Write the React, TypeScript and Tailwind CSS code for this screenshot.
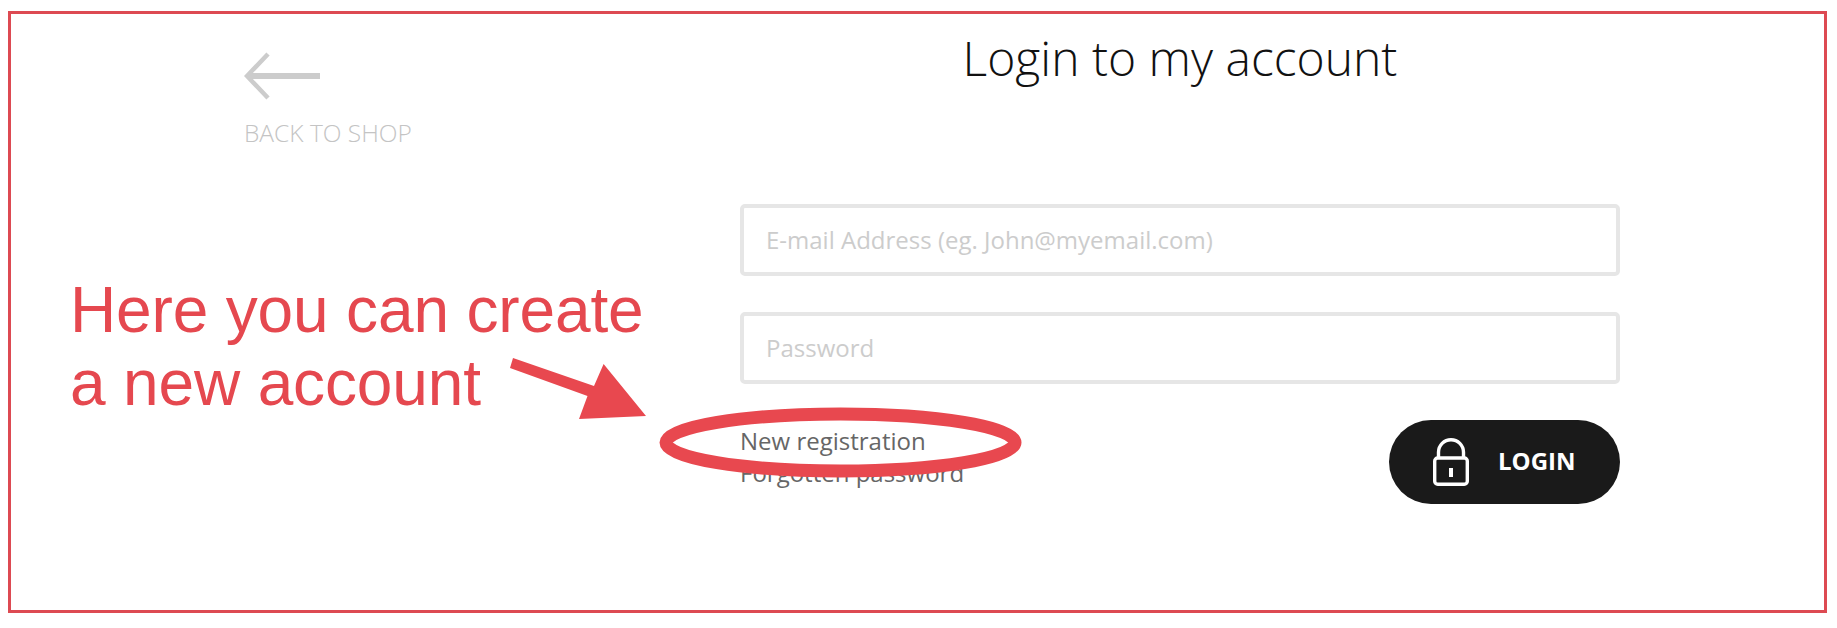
export default function App() {
  return (
    <div className="relative h-[628px] w-[1837px] overflow-hidden bg-white font-['Open_Sans',sans-serif]">
      <div className="ml-[8px] mt-[11px] flex h-[602px] w-[1819px] border-[3px] border-[#dd4a52] pl-[233px]">
        {/* Back link */}
        <div className="w-[496px] shrink-0 pt-[38px]">
          <svg width="78" height="48" viewBox="0 0 78 48" className="block text-[#cccccc]" fill="none" stroke="currentColor">
            <path d="M76 24H4" strokeWidth="6" />
            <path d="M24 2L3 24l21 22" strokeWidth="4.5" />
          </svg>
          <div className="mt-[17px] text-[24.5px] leading-[32px] font-light text-[#c4c4c4]">BACK TO SHOP</div>
        </div>

        {/* Login form */}
        <div className="w-[880px] shrink-0">
          <h1 className="mt-[14px] text-center text-[48px] leading-[60px] font-light text-[#111111]">Login to my account</h1>
          <div className="mt-[116px] flex h-[72px] items-center rounded-[5px] border-4 border-[#e6e6e6] pb-[1px] pl-[22px] text-[24px] text-[#cccccc]">
            E-mail Address (eg. John@myemail.com)
          </div>
          <div className="mt-[36px] flex h-[72px] items-center rounded-[5px] border-4 border-[#e6e6e6] pb-[1px] pl-[22px] text-[24px] text-[#cccccc]">
            Password
          </div>
          <div className="mt-[36px] flex items-start justify-between">
            <div className="pt-[5px] text-[24px] leading-[32px] text-[#666666]">
              <div>New registration</div>
              <div>Forgotten password</div>
            </div>
            <button className="flex h-[84px] w-[231px] items-center gap-[29px] rounded-[42px] bg-[#1a1a1a] pb-[2px] pl-[44px] text-[24px] font-bold text-white">
              <svg width="36" height="48" viewBox="0 0 36 48" fill="none" stroke="currentColor" strokeWidth="3.4" className="mt-[2px]">
                <rect x="1.7" y="20" width="32.6" height="26.3" rx="3" />
                <path d="M5.5 20v-5.8a12.5 12.5 0 0 1 25 0V20" />
                <path d="M18 30v9" strokeWidth="4" />
              </svg>
              LOGIN
            </button>
          </div>
        </div>
      </div>

      {/* Annotation drawn over the page */}
      <div className="absolute left-[70px] top-[274px] font-['Liberation_Sans',sans-serif] text-[64px] leading-[73px] tracking-[-0.15px] text-[#e5484f]">
        Here you can create
        <br />
        a new account
      </div>
      <svg className="absolute left-0 top-0" width="1837" height="628" fill="#e8484f">
        <polygon points="513,358 510,368 587.5,396 579,419 646,416 603.6,364 594,386" />
        <ellipse cx="840.5" cy="442.5" rx="174.5" ry="28.5" fill="none" stroke="#e8484f" strokeWidth="13" />
      </svg>
    </div>
  )
}
